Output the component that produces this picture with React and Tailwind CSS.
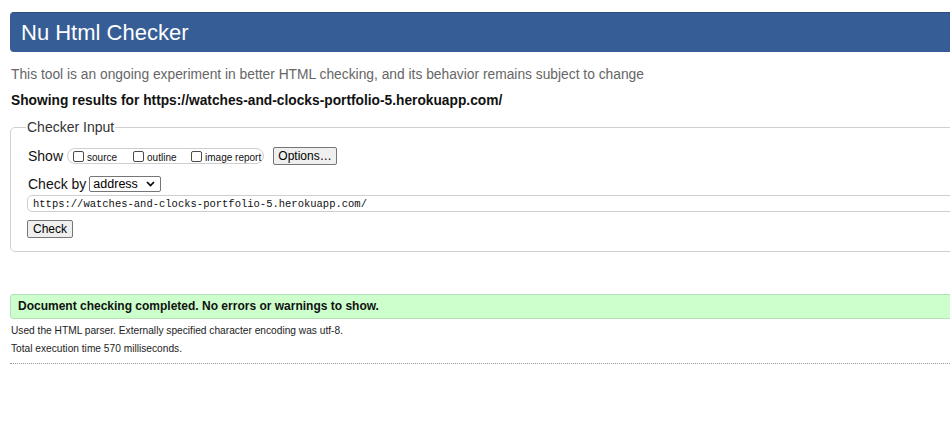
import React from 'react';

function Box({ label, width }) {
  return (
    <span className={`flex items-center whitespace-nowrap ${width}`}>
      <span className="w-[11px] h-[11px] border border-[#4a4a4a] rounded-[2px] bg-white mr-[3px] shrink-0" />
      <span className="text-[10px] leading-[12px] text-[#111] mt-[3px]">{label}</span>
    </span>
  );
}

export default function App() {
  return (
    <div className="w-[950px] h-[430px] overflow-hidden bg-white font-['Liberation_Sans',Arial,sans-serif] text-black">
      <div className="w-[1000px] pl-[10px]">
        <header className="mt-[12px] h-[40px] bg-[#365d95] border-t border-[#2d4f80] rounded-[4px] flex items-center px-[11px]">
          <h1 className="text-[22px] leading-[26px] text-white font-normal">Nu Html Checker</h1>
        </header>

        <p className="mt-[14px] pl-[1px] text-[13.8px] leading-[18px] text-[#666]">
          This tool is an ongoing experiment in better HTML checking, and its behavior remains subject to change
        </p>
        <p className="mt-[8px] pl-[1px] text-[13.75px] leading-[18px] font-bold text-[#111]">
          Showing results for https://watches-and-clocks-portfolio-5.herokuapp.com/
        </p>

        <fieldset className="mt-[8px] border border-[#cfcfcf] rounded-[5px] px-[16px] pb-[11px]">
          <legend className="-ml-[1px] px-[1px] text-[14px] leading-[18px] text-[#333]">Checker Input</legend>

          <div className="mt-[11px] h-[18px] flex items-center">
            <span className="text-[14px] leading-[18px] text-[#111] ml-[1px] mr-[4px]">Show</span>
            <div className="h-[16px] w-[197px] border border-[#cfcfcf] rounded-[8px] flex items-center pl-[5px]">
              <Box label="source" width="w-[60px]" />
              <Box label="outline" width="w-[58px]" />
              <Box label="image report" width="w-[72px]" />
            </div>
            <button className="ml-[9px] h-[18px] w-[64px] bg-[#efefef] border border-[#767676] rounded-[2px] text-[12px] leading-[14px] text-black">
              Options…
            </button>
          </div>

          <div className="mt-[10px] h-[17px] flex items-center">
            <span className="text-[14px] leading-[18px] text-[#111] ml-[1px] mr-[3px]">Check by</span>
            <div className="h-[16px] w-[72px] border border-[#767676] rounded-[2px] flex items-center justify-between pl-[3px] pr-[5px]">
              <span className="text-[12.5px] leading-[14px] text-black">address</span>
              <svg width="9" height="6" viewBox="0 0 9 6">
                <path d="M1 1l3.5 3.5L8 1" fill="none" stroke="#000" strokeWidth="1.6" />
              </svg>
            </div>
          </div>

          <div className="mt-[3px] h-[17px] border border-[#cfcfcf] rounded-[5px] flex items-center pl-[5px]">
            <span className="font-['Liberation_Mono',monospace] text-[10.5px] leading-[12px] text-[#111]">
              https://watches-and-clocks-portfolio-5.herokuapp.com/
            </span>
          </div>

          <button className="mt-[8px] h-[18px] w-[46px] bg-[#efefef] border border-[#767676] rounded-[2px] text-[12px] leading-[14px] text-black">
            Check
          </button>
        </fieldset>

        <div className="mt-[42px] h-[25px] bg-[#ccffcc] border border-[#b5dfb5] rounded-[3px] flex items-center pl-[7px]">
          <span className="text-[12px] leading-[15px] font-bold text-[#111]">
            Document checking completed. No errors or warnings to show.
          </span>
        </div>

        <p className="mt-[5px] pl-[1px] text-[10.2px] leading-[14px] text-[#222]">
          Used the HTML parser. Externally specified character encoding was utf-8.
        </p>
        <p className="mt-[4px] pl-[1px] text-[10.2px] leading-[14px] text-[#222]">
          Total execution time 570 milliseconds.
        </p>
        <div className="mt-[7px] border-t border-dotted border-[#999]" />
      </div>
    </div>
  );
}
